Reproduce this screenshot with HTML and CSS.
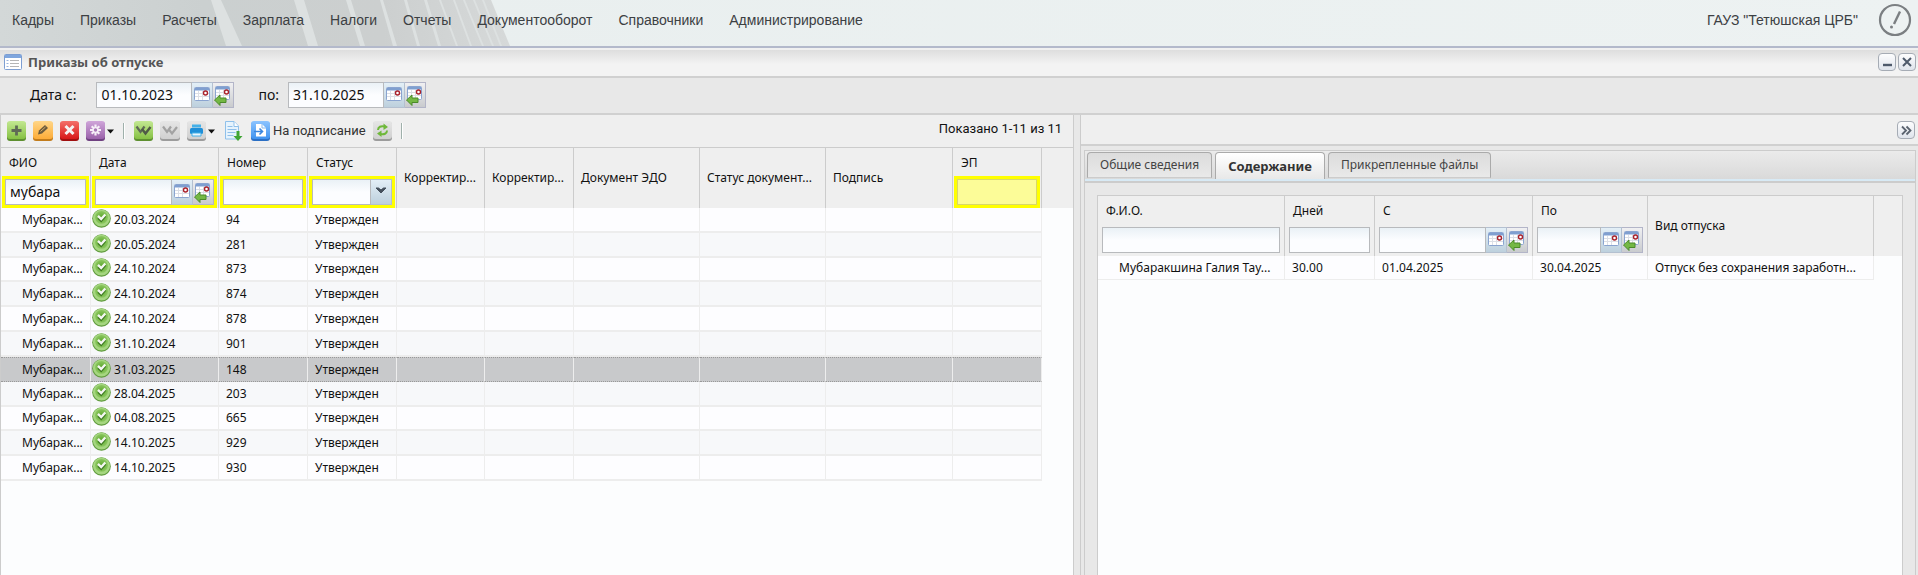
FILE: index.html
```html
<!DOCTYPE html>
<html lang="ru">
<head>
<meta charset="utf-8">
<title>Приказы об отпуске</title>
<link rel="stylesheet" href="styles.css">
</head>
<body>
<svg class="defs" aria-hidden="true">
  <defs>
    <linearGradient id="g-green" x2="0" y2="1"><stop offset="0" stop-color="#c3e892"/><stop offset="1" stop-color="#86c144"/></linearGradient>
    <linearGradient id="g-orange" x2="0" y2="1"><stop offset="0" stop-color="#ffd688"/><stop offset="1" stop-color="#fdac38"/></linearGradient>
    <linearGradient id="g-red" x2="0" y2="1"><stop offset="0" stop-color="#f4706a"/><stop offset="1" stop-color="#d81818"/></linearGradient>
    <linearGradient id="g-violet" x2="0" y2="1"><stop offset="0" stop-color="#d0a6da"/><stop offset="1" stop-color="#9a62aa"/></linearGradient>
    <linearGradient id="g-grey" x2="0" y2="1"><stop offset="0" stop-color="#e6e6e6"/><stop offset="1" stop-color="#d0d0d0"/></linearGradient>
    <linearGradient id="g-blue" x2="0" y2="1"><stop offset="0" stop-color="#8cc4ff"/><stop offset="1" stop-color="#3f93f0"/></linearGradient>
    <radialGradient id="g-ok"><stop offset="0" stop-color="#5aa42c"/><stop offset="1" stop-color="#8cc860"/></radialGradient>
    <symbol id="calendar" viewBox="0 0 16 16">
      <rect x=".5" y="1.500" width="15" height="13" rx="1" fill="#fff" stroke="#8aa4d0"/>
      <path d="M1 2h14v2.500H1z" fill="#7f9fd0"/>
      <path d="M4.500 5v9M8.500 5v9M1 7.500h14M1 10.500h14" stroke="#dcdfe6"/>
      <circle cx="11.500" cy="7" r="2" fill="#fff" stroke="#a8202a" stroke-width="1.400"/>
    </symbol>
    <symbol id="calendar-back" viewBox="0 0 20 22">
      <rect x="2.500" y="2.500" width="14" height="13" rx="1" fill="#fff" stroke="#8aa4d0"/>
      <path d="M3 3h13v2.500H3z" fill="#7f9fd0"/>
      <path d="M6.500 6v9M10.500 6v9M3 8.500h13M3 11.500h13" stroke="#dcdfe6"/>
      <circle cx="13.500" cy="8" r="2" fill="#fff" stroke="#a8202a" stroke-width="1.400"/>
      <path d="M1.500 16l5.500-5v3h6v4.500H7v3z" fill="#74b844" stroke="#4b8a2a"/>
    </symbol>
    <symbol id="ok" viewBox="0 0 20 20">
      <circle cx="10" cy="10" r="9.800" fill="#5f9a3c"/>
      <circle cx="10" cy="9.500" r="9" fill="#a5d680"/>
      <circle cx="10" cy="8.800" r="6.800" fill="url(#g-ok)"/>
      <path d="M6.500 9.500l3.200 3 4.300-5" fill="none" stroke="#3d7a20" stroke-width="2.400"/>
      <path d="M6.300 7.200l3.400 3.400 4.300-4.700" fill="none" stroke="#f4f6f2" stroke-width="2.400"/>
    </symbol>
  </defs>
</svg>

<header class="top">
  <svg class="top-art" viewBox="0 0 620 46" aria-hidden="true">
    <defs>
      <linearGradient id="g-top"><stop offset="0" stop-color="#d3d8d8"/><stop offset=".4" stop-color="#cbd0d0"/><stop offset=".75" stop-color="#cccfcf"/><stop offset="1" stop-color="#d6d9d9"/></linearGradient>
    </defs>
    <path d="M0 0h491l19 46H0z" fill="url(#g-top)"/>
    <path d="M211 0h10l21 46h-16zM294 0h10l14 46h-10zM346 0h5l14 46h-5zM380 0h3l14 46h-4zM404 0h3l13 46h-3zM424 0h3l14 46h-3zM439 0h2l17 46h-2zM453 0h2l17 46h-2zM463 0h2l19 46h-2zM473 0h2l19 46h-2zM482 0h2l18 46h-2z" fill="#dde1e1"/>
  </svg>
  <nav class="menu">
    <a href="#">Кадры</a><a href="#">Приказы</a><a href="#">Расчеты</a><a href="#">Зарплата</a><a href="#">Налоги</a><a href="#">Отчеты</a><a href="#">Документооборот</a><a href="#">Справочники</a><a href="#">Администрирование</a>
  </nav>
  <div class="org">
    <span>ГАУЗ "Тетюшская ЦРБ"</span>
    <button class="bare" aria-label="Сообщения"><svg width="34" height="34" viewBox="0 0 34 34"><g fill="none" stroke="#7b7f82" stroke-width="2.200"><circle cx="17" cy="17" r="15"/><path d="M22 8.500l-6 12.500" stroke-width="2.400"/></g><circle cx="13.500" cy="24" r="1.500" fill="#7b7f82"/></svg></button>
  </div>
</header>

<div class="titlebar">
  <svg width="18" height="16" viewBox="0 0 18 16" aria-hidden="true"><rect x=".5" y=".5" width="17" height="15" rx="1" fill="#fff" stroke="#7d9ed2"/><path d="M1 1h16v3H1z" fill="#7fa6de"/><path d="M2.500 6.500h2M2.500 9.500h2M2.500 12.500h2" stroke="#9ab4dc"/><path d="M6 6.500h9M6 9.500h9M6 12.500h9" stroke="#b5b5b5"/></svg>
  <h1>Приказы об отпуске</h1>
  <button class="tool" aria-label="Свернуть"><svg width="16" height="16" viewBox="0 0 16 16"><path d="M4 11h9" stroke="#4e5a6b" stroke-width="2.400"/></svg></button>
  <button class="tool" aria-label="Закрыть"><svg width="16" height="16" viewBox="0 0 16 16"><path d="M4 4l8 8M12 4l-8 8" stroke="#4e5a6b" stroke-width="2"/></svg></button>
</div>

<form class="period">
  <label for="from">Дата с:</label>
  <div class="field"><input id="from" value="01.10.2023"><button type="button" class="trigger" aria-label="Календарь"><svg width="16" height="16"><use href="#calendar"/></svg></button><button type="button" class="trigger back" aria-label="Очистить"><svg width="20" height="22"><use href="#calendar-back"/></svg></button></div>
  <label for="to">по:</label>
  <div class="field"><input id="to" value="31.10.2025"><button type="button" class="trigger" aria-label="Календарь"><svg width="16" height="16"><use href="#calendar"/></svg></button><button type="button" class="trigger back" aria-label="Очистить"><svg width="20" height="22"><use href="#calendar-back"/></svg></button></div>
</form>

<main class="work">
  <section class="list">
    <div class="toolbar">
      <button class="bare" aria-label="Добавить"><svg width="19" height="20" viewBox="0 0 19 20"><rect y="1" width="19" height="19" rx="3" fill="#5e8f30"/><rect width="19" height="18" rx="3" fill="url(#g-green)"/><path d="M9.500 4.500v10M4.500 9.500h10" stroke="#5f6a56" stroke-width="2.800"/></svg></button>
      <button class="bare" aria-label="Изменить"><svg width="20" height="20" viewBox="0 0 20 20"><rect y="1" width="20" height="19" rx="3" fill="#c27c1c"/><rect width="20" height="18" rx="3" fill="url(#g-orange)"/><path d="M5 13.500l1-4 6-5.500 3 3-6 5.500z" fill="#6b5a3c"/><path d="M7.500 10.500l5-4.500" stroke="#d8b06a"/></svg></button>
      <button class="bare" aria-label="Удалить"><svg width="19" height="20" viewBox="0 0 19 20"><rect y="1" width="19" height="19" rx="3" fill="#a01010"/><rect width="19" height="18" rx="3" fill="url(#g-red)"/><path d="M5.500 5l8 8M13.500 5l-8 8" stroke="#f4f4f4" stroke-width="3"/></svg></button>
      <button class="bare" aria-label="Действия"><svg width="28" height="20" viewBox="0 0 28 20"><rect y="1" width="19" height="19" rx="3" fill="#6f4180"/><rect width="19" height="18" rx="3" fill="url(#g-violet)"/><g stroke="#f6f0f8" stroke-width="2.200"><path d="M9.500 3.500v11M4 9h11M5.700 5.200l7.600 7.600M13.300 5.200l-7.600 7.600"/></g><circle cx="9.500" cy="9" r="1.700" fill="#a878b6"/><path d="M21 8.500h7l-3.500 4z" fill="#111"/></svg></button>
      <i class="split"></i>
      <button class="bare" aria-label="Утвердить"><svg width="19" height="20" viewBox="0 0 19 20"><rect y="1" width="19" height="19" rx="3" fill="#5e8f30"/><rect width="19" height="18" rx="3" fill="url(#g-green)"/><path d="M2.500 5.500l4 5.500 4-5.500" fill="none" stroke="#5f6a56" stroke-width="2.200"/><path d="M8 8l3.500 4.500 5-6.500" fill="none" stroke="#4f5a46" stroke-width="2.400"/></svg></button>
      <button class="bare" aria-label="Снять утверждение"><svg width="20" height="20" viewBox="0 0 20 20"><rect y="1" width="20" height="19" rx="3" fill="#9c9c9c"/><rect width="20" height="18" rx="3" fill="url(#g-grey)"/><path d="M3 5.500l4 5.500 4-5.500M8.500 8l3.500 4.500L17 6" fill="none" stroke="#a2a2a2" stroke-width="2.200"/></svg></button>
      <button class="bare" aria-label="Печать"><svg width="28" height="20" viewBox="0 0 28 20"><rect y="1" width="19" height="19" rx="3" fill="#9c9c9c"/><rect width="19" height="18" rx="3" fill="url(#g-grey)"/><path d="M5 3.500h9v3H5z" fill="#45b0e8"/><rect x="3" y="7" width="13" height="6" rx="1.500" fill="#1f8fd8"/><path d="M5 12h9v3H5z" fill="#eaf6fd" stroke="#45b0e8"/><path d="M21 8.500h7l-3.500 4z" fill="#111"/></svg></button>
      <button class="bare export" aria-label="Выгрузить"><svg width="19" height="20" viewBox="0 0 19 20"><path d="M1.500.500h8.500l4.500 4.500v13h-13z" fill="#e6f3fd" stroke="#8fc0ea"/><path d="M10 .5v5h4.500" fill="#fff" stroke="#8fc0ea"/><path d="M3.500 5.500h5M3.500 8.500h9M3.500 11.500h8M3.500 14.500h6" stroke="#8fbfea"/><path d="M12.500 10h3v5h3L14 20l-4.500-5h3z" fill="#3fa535"/></svg></button>
      <button class="bare sign"><svg width="19" height="20" viewBox="0 0 19 20" aria-hidden="true"><rect y="1" width="19" height="19" rx="3" fill="#2b6fc4"/><rect width="19" height="18" rx="3" fill="url(#g-blue)"/><path d="M5 3h6l4 4v8.500H5z" fill="#fff"/><path d="M11 3v4h4" fill="none" stroke="#8ab8ea"/><path d="M3 10.500h8M8.500 7.500l3 3-3 3" fill="none" stroke="#3a86de" stroke-width="1.600"/></svg>На подписание</button>
      <button class="bare" aria-label="Обновить"><svg width="19" height="20" viewBox="0 0 19 20"><rect y="1" width="19" height="19" rx="3" fill="#9c9c9c"/><rect width="19" height="18" rx="3" fill="url(#g-grey)"/><path d="M5 9c0-3 3-4.500 6.500-3.500M14 9.500c0 3-3 4.500-6.500 3.500" fill="none" stroke="#6fb83a" stroke-width="2"/><path d="M10.500 2.500l4.500 3.500-4.500 3zM8.500 16L4 12.500l4.500-3z" fill="#6fb83a"/></svg></button>
      <i class="split"></i>
      <span class="count">Показано 1-11 из 11</span>
    </div>
    <div class="grid-body">
    <table class="grid orders">
      <colgroup><col class="c90"><col class="c128"><col class="c89"><col class="c89"><col class="c88"><col class="c89"><col class="c126"><col class="c126"><col class="c127"><col class="c89"><col></colgroup>
      <thead><tr>
        <th><label for="f1">ФИО</label><div class="field mark"><input id="f1" value="мубара"></div></th>
        <th><label for="f2">Дата</label><div class="field mark"><input id="f2"><button class="trigger" aria-label="Календарь"><svg width="16" height="16"><use href="#calendar"/></svg></button><button class="trigger back" aria-label="Очистить"><svg width="20" height="22"><use href="#calendar-back"/></svg></button></div></th>
        <th><label for="f3">Номер</label><div class="field mark"><input id="f3"></div></th>
        <th><label for="f4">Статус</label><div class="field mark"><input id="f4" role="combobox"><button class="trigger" aria-label="Выбрать"><svg width="12" height="8" viewBox="0 0 12 8"><path d="M1 1l5 5 5-5H8.500L6 3 3.500 1z" fill="#45505c" stroke="#45505c"/></svg></button></div></th>
        <th>Корректир...</th><th>Корректир...</th><th>Документ ЭДО</th><th>Статус документ...</th><th>Подпись</th>
        <th><label for="f5">ЭП</label><div class="field mark filled"><input id="f5"></div></th>
        <th class="rest"></th>
      </tr></thead>
      <tbody>
        <tr><td>Мубарак...</td><td><svg width="19" height="19"><use href="#ok"/></svg>20.03.2024</td><td>94</td><td>Утвержден</td><td></td><td></td><td></td><td></td><td></td><td></td></tr>
        <tr><td>Мубарак...</td><td><svg width="19" height="19"><use href="#ok"/></svg>20.05.2024</td><td>281</td><td>Утвержден</td><td></td><td></td><td></td><td></td><td></td><td></td></tr>
        <tr><td>Мубарак...</td><td><svg width="19" height="19"><use href="#ok"/></svg>24.10.2024</td><td>873</td><td>Утвержден</td><td></td><td></td><td></td><td></td><td></td><td></td></tr>
        <tr><td>Мубарак...</td><td><svg width="19" height="19"><use href="#ok"/></svg>24.10.2024</td><td>874</td><td>Утвержден</td><td></td><td></td><td></td><td></td><td></td><td></td></tr>
        <tr><td>Мубарак...</td><td><svg width="19" height="19"><use href="#ok"/></svg>24.10.2024</td><td>878</td><td>Утвержден</td><td></td><td></td><td></td><td></td><td></td><td></td></tr>
        <tr><td>Мубарак...</td><td><svg width="19" height="19"><use href="#ok"/></svg>31.10.2024</td><td>901</td><td>Утвержден</td><td></td><td></td><td></td><td></td><td></td><td></td></tr>
        <tr class="selected"><td>Мубарак...</td><td><svg width="19" height="19"><use href="#ok"/></svg>31.03.2025</td><td>148</td><td>Утвержден</td><td></td><td></td><td></td><td></td><td></td><td></td></tr>
        <tr><td>Мубарак...</td><td><svg width="19" height="19"><use href="#ok"/></svg>28.04.2025</td><td>203</td><td>Утвержден</td><td></td><td></td><td></td><td></td><td></td><td></td></tr>
        <tr><td>Мубарак...</td><td><svg width="19" height="19"><use href="#ok"/></svg>04.08.2025</td><td>665</td><td>Утвержден</td><td></td><td></td><td></td><td></td><td></td><td></td></tr>
        <tr><td>Мубарак...</td><td><svg width="19" height="19"><use href="#ok"/></svg>14.10.2025</td><td>929</td><td>Утвержден</td><td></td><td></td><td></td><td></td><td></td><td></td></tr>
        <tr><td>Мубарак...</td><td><svg width="19" height="19"><use href="#ok"/></svg>14.10.2025</td><td>930</td><td>Утвержден</td><td></td><td></td><td></td><td></td><td></td><td></td></tr>
      </tbody>
    </table>
    </div>
  </section>

  <section class="details">
    <div class="collapse">
      <button class="tool" aria-label="Свернуть панель"><svg width="16" height="16" viewBox="0 0 16 16"><path d="M4 4.500l4 4-4 4M8.500 4.500l4 4-4 4" fill="none" stroke="#5b6470" stroke-width="1.800"/></svg></button>
    </div>
    <div class="tab-panel">
      <div class="tabs" role="tablist">
        <button class="tab" role="tab">Общие сведения</button>
        <button class="tab active" role="tab" aria-selected="true">Содержание</button>
        <button class="tab" role="tab">Прикрепленные файлы</button>
      </div>
      <div class="tab-body">
        <div class="grid-body framed">
        <table class="grid content">
          <colgroup><col class="c187"><col class="c90"><col class="c158"><col class="c115"><col class="c226"><col></colgroup>
          <thead><tr>
            <th><label for="r1">Ф.И.О.</label><div class="field"><input id="r1"></div></th>
            <th><label for="r2">Дней</label><div class="field"><input id="r2"></div></th>
            <th><label for="r3">С</label><div class="field"><input id="r3"><button class="trigger" aria-label="Календарь"><svg width="16" height="16"><use href="#calendar"/></svg></button><button class="trigger back" aria-label="Очистить"><svg width="20" height="22"><use href="#calendar-back"/></svg></button></div></th>
            <th><label for="r4">По</label><div class="field"><input id="r4"><button class="trigger" aria-label="Календарь"><svg width="16" height="16"><use href="#calendar"/></svg></button><button class="trigger back" aria-label="Очистить"><svg width="20" height="22"><use href="#calendar-back"/></svg></button></div></th>
            <th>Вид отпуска</th>
            <th class="rest"></th>
          </tr></thead>
          <tbody><tr><td>Мубаракшина Галия Тау...</td><td>30.00</td><td>01.04.2025</td><td>30.04.2025</td><td>Отпуск без сохранения заработн...</td></tr></tbody>
        </table>
        </div>
      </div>
    </div>
  </section>
</main>
</body>
</html>
```
FILE: styles.css
```css
* { box-sizing: border-box; }

body {
  margin: 0;
  height: 100vh;
  overflow: hidden;
  display: flex;
  flex-direction: column;
  background: #e8e8e8;
  color: #111;
  font: 12px/16px "Noto Sans", sans-serif;
}

button, input { font: inherit; color: inherit; }
svg { display: block; flex: none; }
.defs { position: absolute; width: 0; height: 0; }
.bare { display: flex; padding: 0; border: 0; background: none; }

/* top menu */
.top {
  position: relative;
  display: flex;
  justify-content: space-between;
  height: 48px;
  padding: 0 6px 0 12px;
  border-bottom: 2px solid #b3b9cb;
  background: linear-gradient(90deg, #e8eeee, #edf2f2);
  font: 14px/40px "Liberation Sans", Arial, sans-serif;
  color: #3c4043;
}
.top-art { position: absolute; left: 0; top: 0; height: 46px; width: 620px; }
.menu, .org { position: relative; display: flex; }
.menu { gap: 26px; }
.menu a { color: inherit; text-decoration: none; }
.org { gap: 20px; }
.org .bare { padding-top: 3px; height: 40px; }

/* window title */
.titlebar {
  display: flex;
  align-items: center;
  gap: 2px;
  height: 30px;
  padding: 0 2px 2px 4px;
  border-top: 2px solid #f0f0f0;
  border-bottom: 2px solid #d0d0d0;
  background: linear-gradient(#dedede, #f3f3f3 55%);
}
.titlebar h1 {
  flex: 1;
  margin: 0 0 0 4px;
  font: bold 13px/20px "Noto Sans", sans-serif;
  color: #555;
}
.tool {
  display: flex;
  width: 18px;
  height: 18px;
  padding: 0;
  border: 1px solid #a6acb5;
  border-radius: 4px;
  background: linear-gradient(#fdfdfe, #dfe4ec);
}

/* date range */
.period {
  display: flex;
  align-items: center;
  height: 37px;
  padding: 0 30px 2px;
  border-bottom: 2px solid #d0d0d0;
  font-size: 14px;
}
.period .field { width: 138px; margin: 0 24px 0 20px; }
.period .field:last-child { margin-left: 9px; }

/* input with trigger buttons */
.field { display: flex; height: 26px; }
.field input {
  flex: 1;
  min-width: 0;
  padding: 0 4px;
  border: 1px solid #b8babd;
  border-radius: 0;
  background: linear-gradient(#eaf1f6, #fcfdff 50%);
  font-size: 14px;
  outline: 0;
}
.trigger {
  display: flex;
  flex: none;
  align-items: center;
  justify-content: center;
  width: 21px;
  padding: 0 0 2px;
  border: 1px solid #b4c0d0;
  border-left: 0;
  background: linear-gradient(#e3eff7, #bdd0dd);
}
.trigger.back { padding: 0; background: linear-gradient(#f0f0f2, #c9cbce); border-color: #b3b5c8; }
.mark { outline: 3px solid #ff0; }
.filled input { background: #fcfc98; border-color: #d8d868; }

/* panels */
.work { flex: 1; display: grid; grid-template-columns: 56% 1fr; column-gap: 6px; min-height: 0; }
.list, .details { display: flex; flex-direction: column; min-width: 0; }
.list { border: solid #ccc; border-width: 0 1px; }

.toolbar {
  display: flex;
  align-items: center;
  gap: 7px;
  height: 33px;
  padding: 0 11px 0 6px;
  border-bottom: 1px solid #ccc;
  background: #efefef;
}
.toolbar .export { margin-left: 2px; }
.toolbar .sign { align-items: center; gap: 3px; margin-left: 1px; font: 13px/20px Roboto, sans-serif; color: #333; }
.split { width: 2px; height: 16px; margin: 0 2px; background: #9fb0ab; border-right: 1px solid #fff; }
.count { margin-left: auto; padding-bottom: 4px; font: 13px/20px Roboto, sans-serif; }

/* grids */
.grid-body { flex: 1; background: #fcfdfe; overflow: hidden; }
.grid { width: 100%; table-layout: fixed; border-collapse: separate; border-spacing: 0; }
.c88 { width: 88px; } .c89 { width: 89px; } .c90 { width: 90px; } .c126 { width: 126px; } .c127 { width: 127px; } .c128 { width: 128px; }
.c115 { width: 115px; } .c158 { width: 158px; } .c187 { width: 187px; } .c226 { width: 226px; }

.grid th {
  height: 60px;
  padding: 0 3px 0 7px;
  white-space: nowrap;
  text-align: left;
  font-weight: 400;
  background: #efefef;
  border-right: 1px solid #ccc;
}
.grid th:has(.field) { padding: 3px 4px 0; vertical-align: top; }
.grid th.rest { border: 0; }
.grid th label { display: block; height: 28px; padding-left: 4px; line-height: 24px; }
.grid .field { width: 100%; }

.grid td {
  height: 25px;
  padding: 0 7px;
  white-space: nowrap;
  line-height: 22px;
  background: #fdfdff;
  border-right: 1px solid #ededed;
  border-bottom: 2px solid #ededed;
}
.grid td:first-child { padding: 0 3px 0 21px; }
.orders tr:nth-child(even) td { background: #f7f8fa; }
.orders tr:nth-child(6n+3) td { height: 24px; }
.orders td:nth-child(2) { padding-left: 1px; }
.orders td svg { display: inline-block; vertical-align: top; margin-right: 3px; }
.orders tr.selected td { background: #c8c9cb; border-top: 1px dotted #999; border-bottom: 1px dotted #999; }

/* right side */
.details { border-left: 1px solid #ccc; }
.collapse {
  display: flex;
  justify-content: flex-end;
  align-items: center;
  height: 31px;
  padding-right: 3px;
  border-bottom: 2px solid #d0d0d0;
  background: #efefef;
}
.tab-panel {
  flex: 1;
  display: flex;
  flex-direction: column;
  margin: 4px 2px 0 3px;
  border: 1px solid #ccc;
  border-bottom: 0;
}
.tabs {
  display: flex;
  gap: 3px;
  height: 32px;
  padding: 1px 2px 0;
  border-bottom: 2px solid #ccc;
  background: linear-gradient(#d8eaf5, #d8eaf5) 0 100% / 100% 2px no-repeat, linear-gradient(#ebebeb, #d8d8d8);
}
.tab {
  height: 26px;
  padding: 0 12px;
  border: 1px solid #aaa;
  border-bottom-color: #ccc;
  border-radius: 4px 4px 0 0;
  background: linear-gradient(#dcdcdc, #e9e9e9);
  font-size: 12px;
  color: #444;
}
.tab.active { height: 27px; border-bottom: 0; background: linear-gradient(#fff, #e8e8e8); font-size: 13px; font-weight: 700; color: #333; }
.tab-body { flex: 1; display: flex; padding: 12px 12px 0; }
.framed { border: 1px solid #ccc; border-bottom: 0; }
.content td { height: 24px; border-bottom-width: 1px; }
```
